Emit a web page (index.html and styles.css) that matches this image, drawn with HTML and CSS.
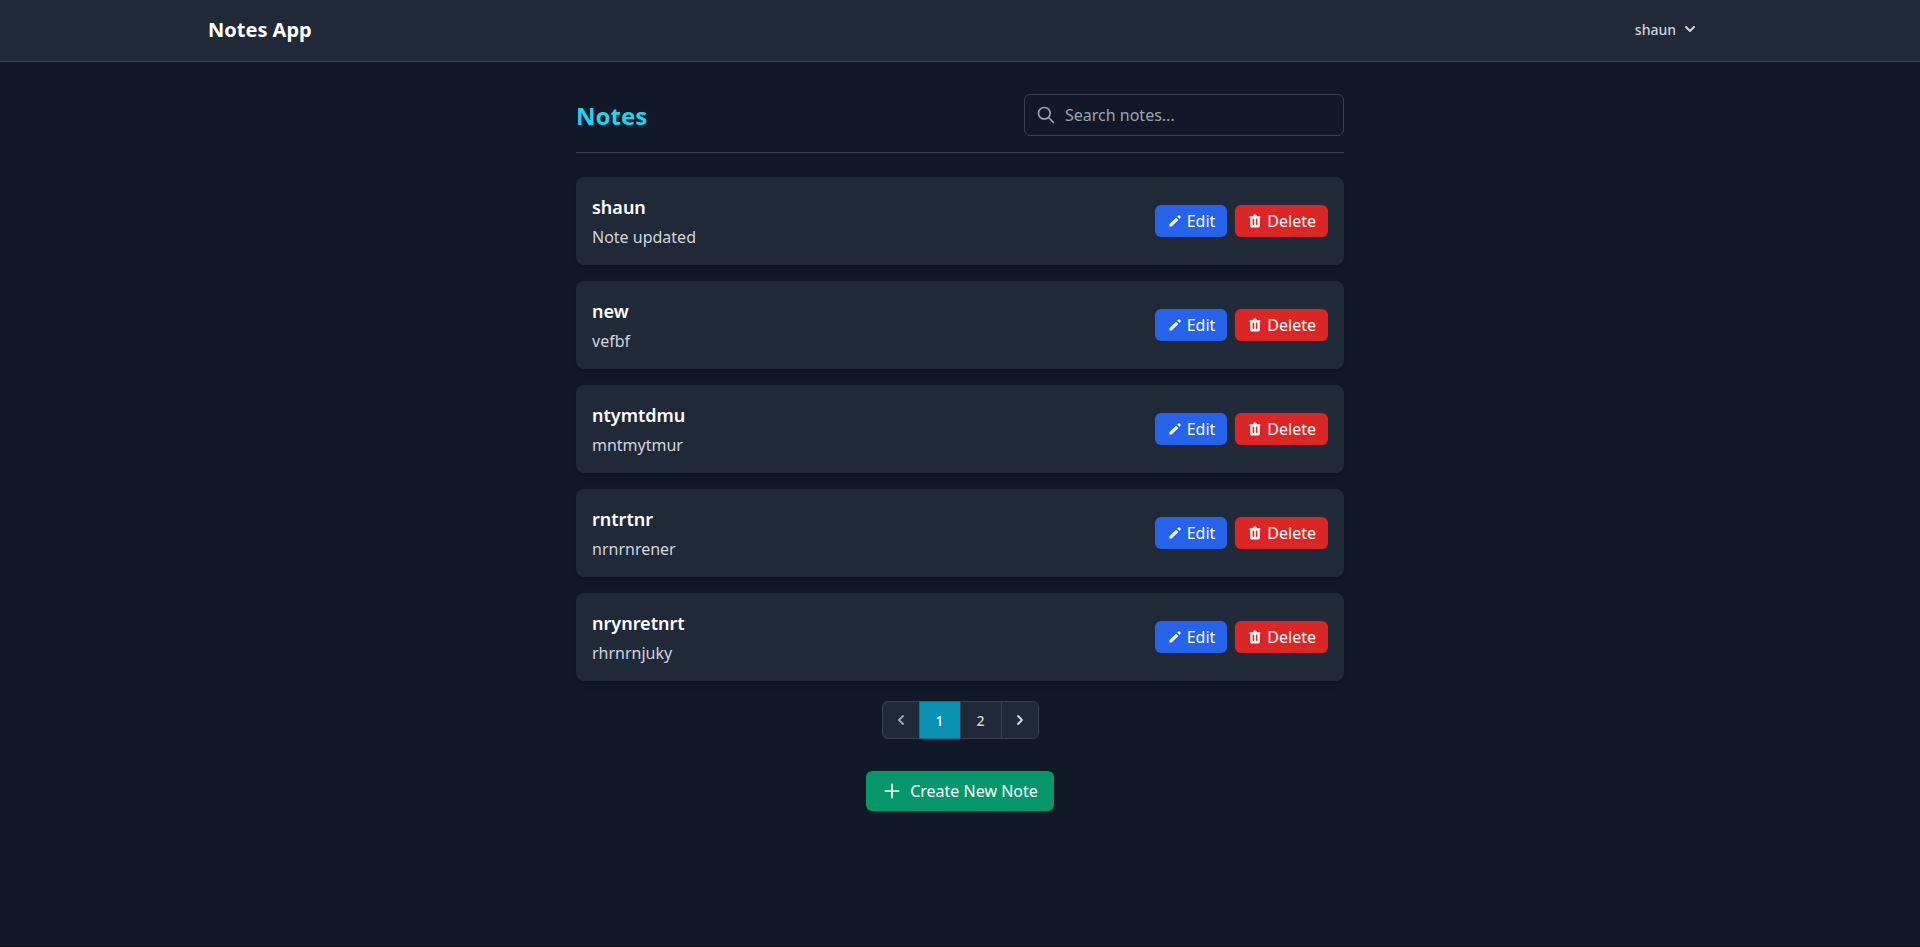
FILE: index.html
```html
<!DOCTYPE html>
<html lang="en">
<head>
<meta charset="utf-8">
<title>Notes App</title>
<link rel="stylesheet" href="styles.css">
</head>
<body>
<svg class="sprite" aria-hidden="true">
  <symbol id="pencil" viewBox="0 0 20 20"><path d="M13.586 3.586a2 2 0 112.828 2.828l-.793.793-2.828-2.828.793-.793zM11.379 5.793L3 14.172V17h2.828l8.38-8.379-2.83-2.828z"/></symbol>
  <symbol id="trash" viewBox="0 0 20 20"><path fill-rule="evenodd" clip-rule="evenodd" d="M9 2a1 1 0 00-.894.553L7.382 4H4a1 1 0 000 2v10a2 2 0 002 2h8a2 2 0 002-2V6a1 1 0 100-2h-3.382l-.724-1.447A1 1 0 0011 2H9zM7 8a1 1 0 012 0v6a1 1 0 11-2 0V8zm5-1a1 1 0 00-1 1v6a1 1 0 102 0V8a1 1 0 00-1-1z"/></symbol>
</svg>
<nav class="nav">
  <div class="nav-inner">
    <a class="brand">Notes App</a>
    <button class="user">shaun
      <svg viewBox="0 0 20 20"><path fill-rule="evenodd" d="M5.293 7.293a1 1 0 011.414 0L10 10.586l3.293-3.293a1 1 0 111.414 1.414l-4 4a1 1 0 01-1.414 0l-4-4a1 1 0 010-1.414z"/></svg>
    </button>
  </div>
</nav>
<main class="main">
  <header class="head">
    <h1>Notes</h1>
    <div class="search">
      <svg class="search-icon" viewBox="0 0 24 24"><path d="M21 21l-6-6m2-5a7 7 0 11-14 0 7 7 0 0114 0z"/></svg>
      <input type="text" placeholder="Search notes...">
    </div>
  </header>
  <ul class="list">
    <li class="card"><div><h2>shaun</h2><p>Note updated</p></div><div class="actions"><button class="btn edit"><svg class="icon"><use href="#pencil"/></svg>Edit</button><button class="btn delete"><svg class="icon"><use href="#trash"/></svg>Delete</button></div></li>
    <li class="card"><div><h2>new</h2><p>vefbf</p></div><div class="actions"><button class="btn edit"><svg class="icon"><use href="#pencil"/></svg>Edit</button><button class="btn delete"><svg class="icon"><use href="#trash"/></svg>Delete</button></div></li>
    <li class="card"><div><h2>ntymtdmu</h2><p>mntmytmur</p></div><div class="actions"><button class="btn edit"><svg class="icon"><use href="#pencil"/></svg>Edit</button><button class="btn delete"><svg class="icon"><use href="#trash"/></svg>Delete</button></div></li>
    <li class="card"><div><h2>rntrtnr</h2><p>nrnrnrener</p></div><div class="actions"><button class="btn edit"><svg class="icon"><use href="#pencil"/></svg>Edit</button><button class="btn delete"><svg class="icon"><use href="#trash"/></svg>Delete</button></div></li>
    <li class="card"><div><h2>nrynretnrt</h2><p>rhrnrnjuky</p></div><div class="actions"><button class="btn edit"><svg class="icon"><use href="#pencil"/></svg>Edit</button><button class="btn delete"><svg class="icon"><use href="#trash"/></svg>Delete</button></div></li>
  </ul>
  <div class="pages">
    <span class="page arrow disabled"><svg viewBox="0 0 20 20"><path fill-rule="evenodd" d="M12.707 5.293a1 1 0 010 1.414L9.414 10l3.293 3.293a1 1 0 01-1.414 1.414l-4-4a1 1 0 010-1.414l4-4a1 1 0 011.414 0z"/></svg></span>
    <a class="page current">1</a>
    <a class="page">2</a>
    <a class="page arrow"><svg viewBox="0 0 20 20"><path fill-rule="evenodd" d="M7.293 14.707a1 1 0 010-1.414L10.586 10 7.293 6.707a1 1 0 011.414-1.414l4 4a1 1 0 010 1.414l-4 4a1 1 0 01-1.414 0z"/></svg></a>
  </div>
  <div class="create-row">
    <a class="create"><svg viewBox="0 0 24 24"><path d="M12 4v16m8-8H4"/></svg>Create New Note</a>
  </div>
</main>
</body>
</html>
```
FILE: styles.css
```css
* { box-sizing: border-box; margin: 0; padding: 0; }
body {
  height: 947px;
  overflow: hidden;
  border-bottom: 1px solid #0a0e17;
  background: #111827;
  color: #fff;
  font: 16px/24px "Noto Sans", sans-serif;
}
button { border: 0; background: none; font: inherit; color: inherit; }
svg { display: block; fill: currentColor; }
.sprite { display: none; }
.icon { width: 16px; height: 16px; }
.nav { height: 62px; background: #1f2937; border-bottom: 1px solid #374151; }
.nav-inner {
  display: flex;
  justify-content: space-between;
  align-items: center;
  max-width: 1536px;
  height: 60px;
  margin: 0 auto;
  padding: 0 16px;
}
.brand { font-size: 20px; line-height: 28px; font-weight: 700; }
.user {
  display: flex;
  align-items: center;
  gap: 4px;
  padding: 8px 12px;
  font-size: 14px;
  font-weight: 500;
  line-height: 16px;
  color: #d1d5db;
}
.user svg { width: 20px; height: 20px; margin-top: -2px; }
.main { width: 768px; margin: 0 auto; padding: 32px 0; }
.head {
  display: flex;
  justify-content: space-between;
  align-items: center;
  margin-bottom: 24px;
  padding-bottom: 16px;
  border-bottom: 1px solid #374151;
}
h1 { padding-top: 2px; font-size: 24px; line-height: 32px; font-weight: 700; color: #22d3ee; }
.search {
  display: flex;
  align-items: center;
  gap: 9px;
  width: 320px;
  height: 42px;
  padding: 0 12px 0 11px;
  border: 1px solid #374151;
  border-radius: 6px;
}
.search-icon { width: 20px; height: 20px; fill: none; stroke: #9ca3af; stroke-width: 2; stroke-linecap: round; stroke-linejoin: round; }
.search input { flex: 1; border: 0; outline: 0; background: none; font: inherit; color: #fff; }
.search input::placeholder { color: #9ca3af; opacity: 1; }
.list { display: grid; gap: 16px; list-style: none; }
.card {
  display: flex;
  justify-content: space-between;
  align-items: center;
  padding: 16px;
  border-radius: 8px;
  background: #1f2937;
  box-shadow: 0 4px 6px -1px rgba(0, 0, 0, .1), 0 2px 4px -2px rgba(0, 0, 0, .1);
}
h2 { margin-bottom: 4px; font-size: 18px; line-height: 28px; font-weight: 600; }
.card p { color: #d1d5db; }
.actions { display: flex; gap: 8px; }
.btn { display: flex; align-items: center; gap: 4px; padding: 4px 12px; border-radius: 6px; }
.edit { background: #2563eb; }
.delete { background: #dc2626; }
.pages { display: flex; width: 156px; margin: 20px auto 0; }
.page {
  display: flex;
  flex: none;
  align-items: center;
  justify-content: center;
  width: 42px;
  height: 38px;
  padding: 2px 1px 0 0;
  margin-left: -1px;
  border: 1px solid #374151;
  background: #1f2937;
  color: #d1d5db;
  font-size: 14px;
  font-weight: 500;
}
.page.arrow { width: 38px; padding: 0; }
.page svg { width: 20px; height: 20px; }
.page:first-child { margin-left: 0; border-radius: 6px 0 0 6px; }
.page:last-child { border-radius: 0 6px 6px 0; }
.disabled { color: #9ca3af; }
.current { background: #0891b2; border-color: #0e7490; color: #fff; }
.create-row { display: flex; justify-content: center; margin-top: 32px; }
.create { display: flex; align-items: center; gap: 8px; padding: 8px 16px; border-radius: 6px; background: #059669; }
.create svg { width: 20px; height: 20px; fill: none; stroke: currentColor; stroke-width: 2; stroke-linecap: round; }
```
